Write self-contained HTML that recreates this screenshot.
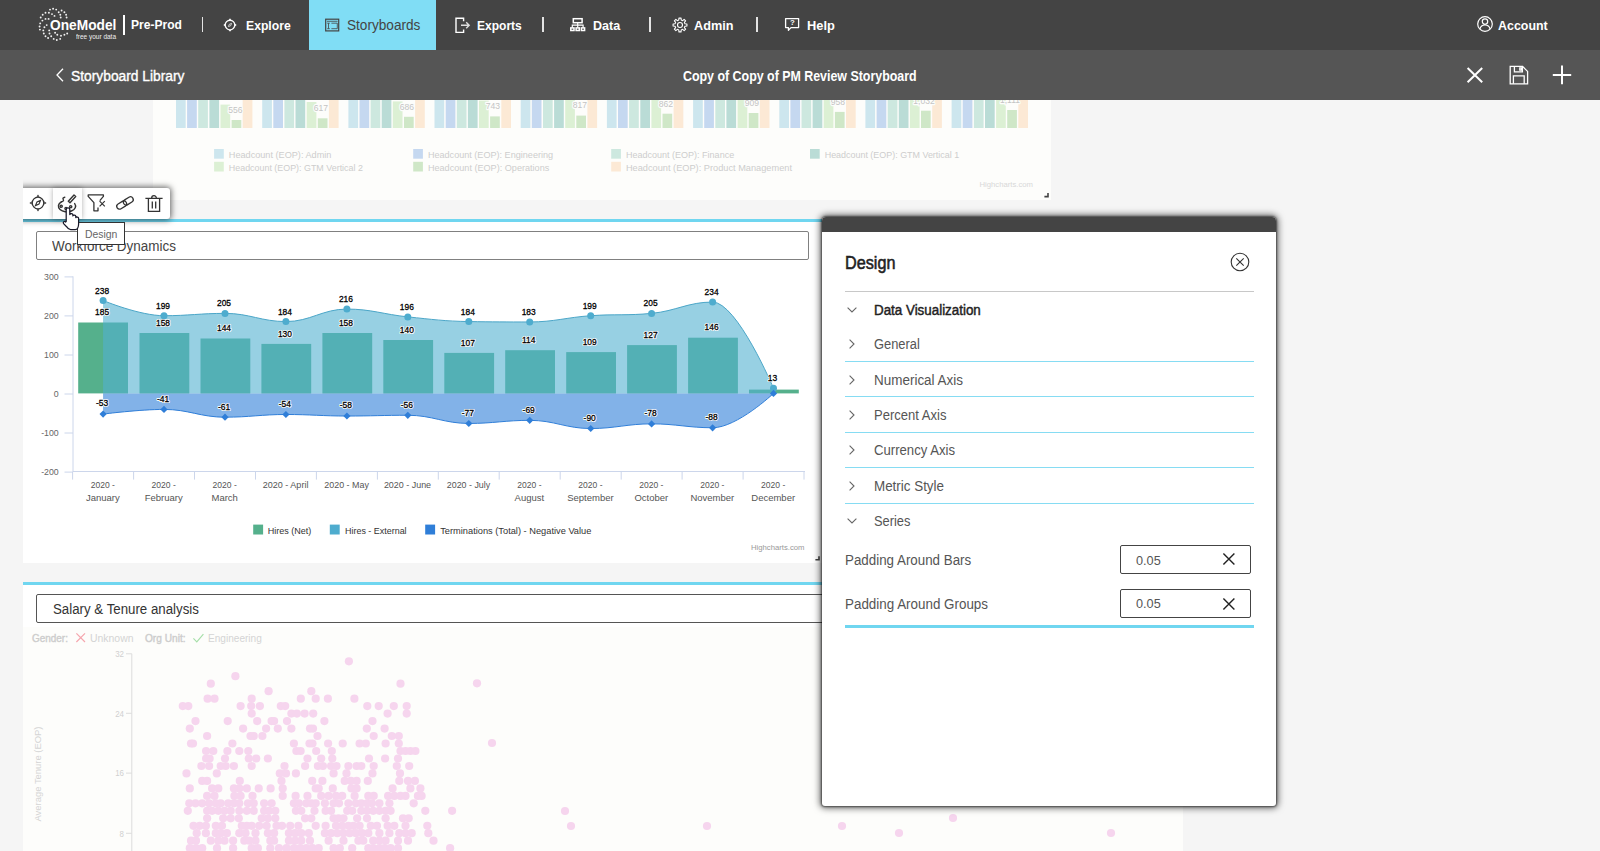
<!DOCTYPE html>
<html><head><meta charset="utf-8"><title>Copy of Copy of PM Review Storyboard</title>
<style>
html,body{margin:0;padding:0}
html{width:1600px;height:851px;overflow:hidden}
body{width:1600px;height:851px;overflow:hidden;position:relative;background:#f5f5f5;font-family:"Liberation Sans",sans-serif;}
.t{position:absolute;white-space:nowrap;transform-origin:0 50%;display:block}
.abs{position:absolute}
svg{position:absolute;overflow:visible}
svg text{font-family:"Liberation Sans",sans-serif}
#nav{position:absolute;left:0;top:0;width:1600px;height:50px;background:#444}
#sub{position:absolute;left:0;top:50px;width:1600px;height:50px;background:#555}
.sep{position:absolute;top:17px;height:14.5px;width:1.5px;background:#e4e4e4}
.card{position:absolute;background:#fff}
.inp{position:absolute;box-sizing:border-box;border:1px solid #808080;border-radius:2px;background:#fff}
.bl{position:absolute;height:1px;background:#86dcf3;left:844.5px;width:409.5px}
</style></head>
<body>
<div id="nav">
<svg width="130" height="50" style="left:0;top:0" fill="#fff" fill-opacity="0.93"><circle cx="53.1" cy="8.8" r="0.95"/><circle cx="50.0" cy="9.6" r="0.95"/><circle cx="56.2" cy="9.6" r="0.95"/><circle cx="61.6" cy="10.5" r="0.95"/><circle cx="58.7" cy="12.2" r="0.95"/><circle cx="64.4" cy="12.2" r="0.95"/><circle cx="45.5" cy="12.7" r="0.95"/><circle cx="48.9" cy="12.7" r="0.95"/><circle cx="52.0" cy="14.1" r="0.95"/><circle cx="42.7" cy="14.7" r="0.95"/><circle cx="60.3" cy="14.7" r="0.95"/><circle cx="66.1" cy="14.7" r="0.95"/><circle cx="54.5" cy="15.9" r="0.95"/><circle cx="40.7" cy="17.5" r="0.95"/><circle cx="60.7" cy="17.5" r="0.95"/><circle cx="66.6" cy="17.5" r="0.95"/><circle cx="45.5" cy="18.9" r="0.95"/><circle cx="48.6" cy="18.9" r="0.95"/><circle cx="42.4" cy="20.6" r="0.95"/><circle cx="40.2" cy="23.4" r="0.95"/><circle cx="46.7" cy="25.1" r="0.95"/><circle cx="39.6" cy="26.5" r="0.95"/><circle cx="44.4" cy="27.3" r="0.95"/><circle cx="39.9" cy="29.6" r="0.95"/><circle cx="43.3" cy="30.4" r="0.95"/><circle cx="49.2" cy="30.4" r="0.95"/><circle cx="55.1" cy="32.7" r="0.95"/><circle cx="43.8" cy="33.5" r="0.95"/><circle cx="49.5" cy="33.5" r="0.95"/><circle cx="67.2" cy="33.5" r="0.95"/><circle cx="57.3" cy="34.7" r="0.95"/><circle cx="64.4" cy="34.7" r="0.95"/><circle cx="61.0" cy="35.8" r="0.95"/><circle cx="45.5" cy="36.3" r="0.95"/><circle cx="51.2" cy="36.3" r="0.95"/><circle cx="48.1" cy="38.0" r="0.95"/><circle cx="53.7" cy="38.9" r="0.95"/><circle cx="60.2" cy="38.9" r="0.95"/><circle cx="56.8" cy="40.0" r="0.95"/></svg>
<span class="t" style="left:49.7px;top:16.1px;font-size:15px;line-height:18px;font-weight:bold;color:#fff;transform:scaleX(0.9159);">OneModel</span>
<span class="t" style="left:76.0px;top:32.2px;font-size:8px;line-height:10px;font-weight:normal;color:#f0f0f0;transform:scaleX(0.8104);">free your data</span>
<div class="abs" style="left:122.6px;top:15px;width:2px;height:20px;background:#fff"></div>
<span class="t" style="left:131.0px;top:17.5px;font-size:12.5px;line-height:15px;font-weight:bold;color:#fff;transform:scaleX(0.9661);">Pre-Prod</span>
<div class="sep" style="left:201.6px"></div>
<div class="sep" style="left:542.0px"></div>
<div class="sep" style="left:649.0px"></div>
<div class="sep" style="left:756.2px"></div>
<svg width="16" height="16" style="left:222.4px;top:16.5px" fill="none" stroke="#fff" stroke-width="1.35">
<circle cx="8" cy="8" r="4.800"/><path d="M8 1.300l1.200 1.800h-2.400zM8 14.700l1.200-1.800h-2.400zM1.300 8l1.800-1.200v2.400zM14.700 8l-1.800-1.200v2.400z" fill="#fff" stroke="none"/>
<path d="M9.600 6.400L8.700 8.700 6.400 9.600 7.300 7.300z" stroke-width="0.900" stroke="#ddd"/></svg>
<span class="t" style="left:245.6px;top:17.6px;font-size:13.5px;line-height:16px;font-weight:bold;color:#fff;transform:scaleX(0.9027);">Explore</span>
<div class="abs" style="left:309px;top:0;width:127.4px;height:50px;background:#80ddf5"></div>
<svg width="16" height="14" style="left:324px;top:17.9px" fill="none" stroke="#444" stroke-width="1.2">
<rect x="1.700" y="1.200" width="13" height="11.700"/><path d="M3 3.300h10.600M3.200 5.200h2.600M3.200 10.700h2.600M4.500 5.200v5.500M7.400 5.200h5.900v5.500H7.400" stroke-width="0.8"/></svg>
<span class="t" style="left:346.9px;top:16.8px;font-size:14px;line-height:17px;font-weight:normal;color:#444;transform:scaleX(0.9725);">Storyboards</span>
<svg width="18" height="18" style="left:453.5px;top:15.5px" fill="none" stroke="#fff" stroke-width="1.4">
<path d="M9.6 5.2V2.2H2v14.2h7.6v-3"/><path d="M7 9.200h8M12.200 6.200l3 3-3 3" stroke="#ddd" stroke-width="1.400"/></svg>
<span class="t" style="left:477.2px;top:17.6px;font-size:13.5px;line-height:16px;font-weight:bold;color:#fff;transform:scaleX(0.8914);">Exports</span>
<svg width="18" height="16" style="left:568.5px;top:16.5px" fill="none" stroke="#fff" stroke-width="1.5">
<rect x="4.300" y="1.700" width="8.800" height="4"/><path d="M8.700 5.700v2.500M3.300 10.800V8.200h10.800v2.600M8.700 8.200v2.600" stroke-width="1.200"/>
<rect x="1.800" y="10.900" width="3.200" height="2.600"/><rect x="7.100" y="10.900" width="3.200" height="2.600"/><rect x="12.400" y="10.900" width="3.200" height="2.600"/></svg>
<span class="t" style="left:592.8px;top:17.6px;font-size:13.5px;line-height:16px;font-weight:bold;color:#fff;transform:scaleX(0.9296);">Data</span>
<svg width="16" height="16" style="left:671.7px;top:16.6px" fill="none" stroke="#fff" stroke-width="1.1" stroke-linejoin="round">
<path d="M6.79 3.05 L6.95 1.08 L9.05 1.08 L9.21 3.05 L10.65 3.64 L12.15 2.37 L13.63 3.85 L12.36 5.35 L12.95 6.79 L14.92 6.95 L14.92 9.05 L12.95 9.21 L12.36 10.65 L13.63 12.15 L12.15 13.63 L10.65 12.36 L9.21 12.95 L9.05 14.92 L6.95 14.92 L6.79 12.95 L5.35 12.36 L3.85 13.63 L2.37 12.15 L3.64 10.65 L3.05 9.21 L1.08 9.05 L1.08 6.95 L3.05 6.79 L3.64 5.35 L2.37 3.85 L3.85 2.37 L5.35 3.64 Z"/><circle cx="8" cy="8" r="2.5"/></svg>
<span class="t" style="left:693.6px;top:17.6px;font-size:13.5px;line-height:16px;font-weight:bold;color:#fff;transform:scaleX(0.9382);">Admin</span>
<svg width="16" height="15" style="left:784px;top:17px" fill="none" stroke="#fff" stroke-width="1.3">
<path d="M1.6 1.6h13v9H7l-2.6 2.6V10.6H1.6z" stroke-linejoin="round"/></svg>
<span class="t" style="left:789.6px;top:18.4px;font-size:8px;line-height:10px;font-weight:bold;color:#fff;transform:scaleX(0.9823);">?</span>
<span class="t" style="left:807.2px;top:17.6px;font-size:13.5px;line-height:16px;font-weight:bold;color:#fff;transform:scaleX(0.9503);">Help</span>
<svg width="18" height="18" style="left:1475.7px;top:15.4px" fill="none" stroke="#fff" stroke-width="1.2">
<circle cx="9" cy="9" r="7.3"/><circle cx="9" cy="6.6" r="2.7"/><path d="M3.9 14c.6-2.6 2.6-4 5.1-4s4.5 1.4 5.1 4"/></svg>
<span class="t" style="left:1498.4px;top:17.6px;font-size:13.5px;line-height:16px;font-weight:bold;color:#fff;transform:scaleX(0.9204);">Account</span>
</div>
<div id="sub"></div>
<svg width="10" height="16" style="left:55px;top:67.4px" fill="none" stroke="#fff" stroke-width="1.3"><path d="M8 1.8L2 8l6 6.2"/></svg>
<span class="t" style="left:71.3px;top:67.7px;font-size:14px;line-height:17px;font-weight:normal;color:#fff;transform:scaleX(0.9856);-webkit-text-stroke:0.35px #fff;">Storyboard Library</span>
<span class="t" style="left:682.7px;top:66.8px;font-size:15px;line-height:18px;font-weight:bold;color:#fff;transform:scaleX(0.8269);">Copy of Copy of PM Review Storyboard</span>
<svg width="20" height="20" style="left:1465px;top:65.4px" fill="none" stroke="#fff" stroke-width="2"><path d="M2.6 3l14.6 14.2M17.2 3L2.6 17.2"/></svg>
<svg width="22" height="22" style="left:1507.5px;top:64.4px" fill="none" stroke="#fff" stroke-width="1.3">
<path d="M2.2 2.4h12.4l5 5v12.4H2.2z"/><path d="M6.4 2.4v5.4h8V2.4M11.8 3.8h1.6v2.4h-1.6zM5.4 19.8v-8h10.8v8"/></svg>
<svg width="22" height="22" style="left:1551px;top:64.4px" fill="none" stroke="#fff" stroke-width="2"><path d="M11 1.6v18.6M1.8 11h18.4"/></svg>
<div class="card" style="left:153px;top:100px;width:898px;height:100px;background:#fdfdfb"></div>
<svg width="1600" height="110" style="left:0;top:100px;overflow:hidden" viewBox="0 100 1600 110"><rect x="176.0" y="100.0" width="9.7" height="28.0" fill="#cde6ee"/><rect x="187.1" y="100.0" width="9.7" height="28.0" fill="#c5d8f0"/><rect x="198.2" y="100.0" width="9.7" height="28.0" fill="#cde8df"/><rect x="209.4" y="100.0" width="9.7" height="28.0" fill="#badcd6"/><rect x="220.5" y="104.6" width="9.7" height="23.4" fill="#dcf0d4"/><rect x="231.6" y="120.0" width="9.7" height="8.0" fill="#cfe7c7"/><rect x="242.7" y="100.0" width="9.7" height="28.0" fill="#fce9d5"/><rect x="262.2" y="100.0" width="9.7" height="28.0" fill="#cde6ee"/><rect x="273.3" y="100.0" width="9.7" height="28.0" fill="#c5d8f0"/><rect x="284.4" y="100.0" width="9.7" height="28.0" fill="#cde8df"/><rect x="295.5" y="100.0" width="9.7" height="28.0" fill="#badcd6"/><rect x="306.7" y="102.0" width="9.7" height="26.0" fill="#dcf0d4"/><rect x="317.8" y="118.3" width="9.7" height="9.7" fill="#cfe7c7"/><rect x="328.9" y="100.0" width="9.7" height="28.0" fill="#fce9d5"/><rect x="348.4" y="100.0" width="9.7" height="28.0" fill="#cde6ee"/><rect x="359.5" y="100.0" width="9.7" height="28.0" fill="#c5d8f0"/><rect x="370.6" y="100.0" width="9.7" height="28.0" fill="#cde8df"/><rect x="381.7" y="100.0" width="9.7" height="28.0" fill="#badcd6"/><rect x="392.8" y="101.4" width="9.7" height="26.6" fill="#dcf0d4"/><rect x="404.0" y="116.8" width="9.7" height="11.2" fill="#cfe7c7"/><rect x="415.1" y="100.0" width="9.7" height="28.0" fill="#fce9d5"/><rect x="434.5" y="100.0" width="9.7" height="28.0" fill="#cde6ee"/><rect x="445.7" y="100.0" width="9.7" height="28.0" fill="#c5d8f0"/><rect x="456.8" y="100.0" width="9.7" height="28.0" fill="#cde8df"/><rect x="467.9" y="100.0" width="9.7" height="28.0" fill="#badcd6"/><rect x="479.0" y="100.6" width="9.7" height="27.4" fill="#dcf0d4"/><rect x="490.1" y="116.4" width="9.7" height="11.6" fill="#cfe7c7"/><rect x="501.3" y="100.0" width="9.7" height="28.0" fill="#fce9d5"/><rect x="520.7" y="100.0" width="9.7" height="28.0" fill="#cde6ee"/><rect x="531.8" y="100.0" width="9.7" height="28.0" fill="#c5d8f0"/><rect x="543.0" y="100.0" width="9.7" height="28.0" fill="#cde8df"/><rect x="554.1" y="100.0" width="9.7" height="28.0" fill="#badcd6"/><rect x="565.2" y="100.0" width="9.7" height="28.0" fill="#dcf0d4"/><rect x="576.3" y="115.6" width="9.7" height="12.4" fill="#cfe7c7"/><rect x="587.4" y="100.0" width="9.7" height="28.0" fill="#fce9d5"/><rect x="606.9" y="100.0" width="9.7" height="28.0" fill="#cde6ee"/><rect x="618.0" y="100.0" width="9.7" height="28.0" fill="#c5d8f0"/><rect x="629.1" y="100.0" width="9.7" height="28.0" fill="#cde8df"/><rect x="640.3" y="100.0" width="9.7" height="28.0" fill="#badcd6"/><rect x="651.4" y="100.0" width="9.7" height="28.0" fill="#dcf0d4"/><rect x="662.5" y="113.7" width="9.7" height="14.3" fill="#cfe7c7"/><rect x="673.6" y="100.0" width="9.7" height="28.0" fill="#fce9d5"/><rect x="693.1" y="100.0" width="9.7" height="28.0" fill="#cde6ee"/><rect x="704.2" y="100.0" width="9.7" height="28.0" fill="#c5d8f0"/><rect x="715.3" y="100.0" width="9.7" height="28.0" fill="#cde8df"/><rect x="726.4" y="100.0" width="9.7" height="28.0" fill="#badcd6"/><rect x="737.6" y="100.0" width="9.7" height="28.0" fill="#dcf0d4"/><rect x="748.7" y="113.0" width="9.7" height="15.0" fill="#cfe7c7"/><rect x="759.8" y="100.0" width="9.7" height="28.0" fill="#fce9d5"/><rect x="779.3" y="100.0" width="9.7" height="28.0" fill="#cde6ee"/><rect x="790.4" y="100.0" width="9.7" height="28.0" fill="#c5d8f0"/><rect x="801.5" y="100.0" width="9.7" height="28.0" fill="#cde8df"/><rect x="812.6" y="100.0" width="9.7" height="28.0" fill="#badcd6"/><rect x="823.7" y="100.0" width="9.7" height="28.0" fill="#dcf0d4"/><rect x="834.9" y="111.9" width="9.7" height="16.1" fill="#cfe7c7"/><rect x="846.0" y="100.0" width="9.7" height="28.0" fill="#fce9d5"/><rect x="865.4" y="100.0" width="9.7" height="28.0" fill="#cde6ee"/><rect x="876.6" y="100.0" width="9.7" height="28.0" fill="#c5d8f0"/><rect x="887.7" y="100.0" width="9.7" height="28.0" fill="#cde8df"/><rect x="898.8" y="100.0" width="9.7" height="28.0" fill="#badcd6"/><rect x="909.9" y="100.0" width="9.7" height="28.0" fill="#dcf0d4"/><rect x="921.0" y="110.7" width="9.7" height="17.3" fill="#cfe7c7"/><rect x="932.2" y="100.0" width="9.7" height="28.0" fill="#fce9d5"/><rect x="951.6" y="100.0" width="9.7" height="28.0" fill="#cde6ee"/><rect x="962.7" y="100.0" width="9.7" height="28.0" fill="#c5d8f0"/><rect x="973.9" y="100.0" width="9.7" height="28.0" fill="#cde8df"/><rect x="985.0" y="100.0" width="9.7" height="28.0" fill="#badcd6"/><rect x="996.1" y="100.0" width="9.7" height="28.0" fill="#dcf0d4"/><rect x="1007.2" y="110.0" width="9.7" height="18.0" fill="#cfe7c7"/><rect x="1018.3" y="100.0" width="9.7" height="28.0" fill="#fce9d5"/><text x="235.3" y="112.9" font-size="9.5" text-anchor="middle" textLength="14.3" lengthAdjust="spacingAndGlyphs" fill="#fdfdfb" stroke="#fdfdfb" stroke-width="2.4" stroke-linejoin="round">556</text><text x="235.3" y="112.9" font-size="9.5" text-anchor="middle" textLength="14.3" lengthAdjust="spacingAndGlyphs" fill="#c4c4c4">556</text><text x="321.0" y="110.7" font-size="9.5" text-anchor="middle" textLength="14.3" lengthAdjust="spacingAndGlyphs" fill="#fdfdfb" stroke="#fdfdfb" stroke-width="2.4" stroke-linejoin="round">617</text><text x="321.0" y="110.7" font-size="9.5" text-anchor="middle" textLength="14.3" lengthAdjust="spacingAndGlyphs" fill="#c4c4c4">617</text><text x="407.0" y="109.9" font-size="9.5" text-anchor="middle" textLength="14.3" lengthAdjust="spacingAndGlyphs" fill="#fdfdfb" stroke="#fdfdfb" stroke-width="2.4" stroke-linejoin="round">686</text><text x="407.0" y="109.9" font-size="9.5" text-anchor="middle" textLength="14.3" lengthAdjust="spacingAndGlyphs" fill="#c4c4c4">686</text><text x="493.0" y="108.5" font-size="9.5" text-anchor="middle" textLength="14.3" lengthAdjust="spacingAndGlyphs" fill="#fdfdfb" stroke="#fdfdfb" stroke-width="2.4" stroke-linejoin="round">743</text><text x="493.0" y="108.5" font-size="9.5" text-anchor="middle" textLength="14.3" lengthAdjust="spacingAndGlyphs" fill="#c4c4c4">743</text><text x="580.0" y="107.5" font-size="9.5" text-anchor="middle" textLength="14.3" lengthAdjust="spacingAndGlyphs" fill="#fdfdfb" stroke="#fdfdfb" stroke-width="2.4" stroke-linejoin="round">817</text><text x="580.0" y="107.5" font-size="9.5" text-anchor="middle" textLength="14.3" lengthAdjust="spacingAndGlyphs" fill="#c4c4c4">817</text><text x="666.0" y="106.5" font-size="9.5" text-anchor="middle" textLength="14.3" lengthAdjust="spacingAndGlyphs" fill="#fdfdfb" stroke="#fdfdfb" stroke-width="2.4" stroke-linejoin="round">862</text><text x="666.0" y="106.5" font-size="9.5" text-anchor="middle" textLength="14.3" lengthAdjust="spacingAndGlyphs" fill="#c4c4c4">862</text><text x="752.0" y="105.5" font-size="9.5" text-anchor="middle" textLength="14.3" lengthAdjust="spacingAndGlyphs" fill="#fdfdfb" stroke="#fdfdfb" stroke-width="2.4" stroke-linejoin="round">909</text><text x="752.0" y="105.5" font-size="9.5" text-anchor="middle" textLength="14.3" lengthAdjust="spacingAndGlyphs" fill="#c4c4c4">909</text><text x="838.0" y="104.5" font-size="9.5" text-anchor="middle" textLength="14.3" lengthAdjust="spacingAndGlyphs" fill="#fdfdfb" stroke="#fdfdfb" stroke-width="2.4" stroke-linejoin="round">958</text><text x="838.0" y="104.5" font-size="9.5" text-anchor="middle" textLength="14.3" lengthAdjust="spacingAndGlyphs" fill="#c4c4c4">958</text><text x="924.0" y="103.6" font-size="9.5" text-anchor="middle" textLength="21.4" lengthAdjust="spacingAndGlyphs" fill="#fdfdfb" stroke="#fdfdfb" stroke-width="2.4" stroke-linejoin="round">1,032</text><text x="924.0" y="103.6" font-size="9.5" text-anchor="middle" textLength="21.4" lengthAdjust="spacingAndGlyphs" fill="#c4c4c4">1,032</text><text x="1010.0" y="103.3" font-size="9.5" text-anchor="middle" textLength="20.1" lengthAdjust="spacingAndGlyphs" fill="#fdfdfb" stroke="#fdfdfb" stroke-width="2.4" stroke-linejoin="round">1,111</text><text x="1010.0" y="103.3" font-size="9.5" text-anchor="middle" textLength="20.1" lengthAdjust="spacingAndGlyphs" fill="#c4c4c4">1,111</text><rect x="214.1" y="149.0" width="9.7" height="9.7" fill="#cde6ee"/><text x="228.8" y="157.8" font-size="9" text-anchor="start" textLength="102.6" lengthAdjust="spacingAndGlyphs" fill="#cdcdcd">Headcount (EOP): Admin</text><rect x="214.1" y="161.8" width="9.7" height="9.7" fill="#dcf0d4"/><text x="228.8" y="170.6" font-size="9" text-anchor="start" textLength="134.1" lengthAdjust="spacingAndGlyphs" fill="#cdcdcd">Headcount (EOP): GTM Vertical 2</text><rect x="413.2" y="149.0" width="9.7" height="9.7" fill="#c5d8f0"/><text x="427.9" y="157.8" font-size="9" text-anchor="start" textLength="125.2" lengthAdjust="spacingAndGlyphs" fill="#cdcdcd">Headcount (EOP): Engineering</text><rect x="413.2" y="161.8" width="9.7" height="9.7" fill="#cfe7c7"/><text x="427.9" y="170.6" font-size="9" text-anchor="start" textLength="121.4" lengthAdjust="spacingAndGlyphs" fill="#cdcdcd">Headcount (EOP): Operations</text><rect x="611.2" y="149.0" width="9.7" height="9.7" fill="#cde8df"/><text x="625.9" y="157.8" font-size="9" text-anchor="start" textLength="108.3" lengthAdjust="spacingAndGlyphs" fill="#cdcdcd">Headcount (EOP): Finance</text><rect x="611.2" y="161.8" width="9.7" height="9.7" fill="#fce9d5"/><text x="625.9" y="170.6" font-size="9" text-anchor="start" textLength="166.1" lengthAdjust="spacingAndGlyphs" fill="#cdcdcd">Headcount (EOP): Product Management</text><rect x="810.0" y="149.0" width="9.7" height="9.7" fill="#badcd6"/><text x="824.7" y="157.8" font-size="9" text-anchor="start" textLength="134.5" lengthAdjust="spacingAndGlyphs" fill="#cdcdcd">Headcount (EOP): GTM Vertical 1</text><text x="979.5" y="187.0" font-size="7.5" text-anchor="start" textLength="53.5" lengthAdjust="spacingAndGlyphs" fill="#d8d8d8">Highcharts.com</text><path d="M1044.4 196.6h3.6v-3.600" fill="none" stroke="#444" stroke-width="1.600"/></svg>
<div class="card" style="left:23px;top:219px;width:799px;height:344.4px;border-top:3px solid #70d6f0;box-sizing:border-box"></div>
<div class="inp" style="left:36.4px;top:231px;width:772.3px;height:29.2px"></div>
<span class="t" style="left:52.2px;top:238.4px;font-size:14px;line-height:17px;font-weight:normal;color:#444;transform:scaleX(0.9622);">Workforce Dynamics</span>
<svg width="830" height="300" style="left:0;top:265px" viewBox="0 265 830 300"><path d="M73 276.3V471.5H805" fill="none" stroke="#ccd6eb" stroke-width="1"/><path d="M64.5 276.9H73" stroke="#ccd6eb" stroke-width="1"/><text x="58.7" y="279.7" font-size="9.7" text-anchor="end" textLength="14.6" lengthAdjust="spacingAndGlyphs" fill="#666">300</text><path d="M64.5 315.9H73" stroke="#ccd6eb" stroke-width="1"/><text x="58.7" y="318.7" font-size="9.7" text-anchor="end" textLength="14.6" lengthAdjust="spacingAndGlyphs" fill="#666">200</text><path d="M64.5 355.0H73" stroke="#ccd6eb" stroke-width="1"/><text x="58.7" y="357.8" font-size="9.7" text-anchor="end" textLength="14.6" lengthAdjust="spacingAndGlyphs" fill="#666">100</text><path d="M64.5 394.0H73" stroke="#ccd6eb" stroke-width="1"/><text x="58.7" y="396.8" font-size="9.7" text-anchor="end" textLength="4.9" lengthAdjust="spacingAndGlyphs" fill="#666">0</text><path d="M64.5 433.0H73" stroke="#ccd6eb" stroke-width="1"/><text x="58.7" y="435.8" font-size="9.7" text-anchor="end" textLength="17.5" lengthAdjust="spacingAndGlyphs" fill="#666">-100</text><path d="M64.5 472.1H73" stroke="#ccd6eb" stroke-width="1"/><text x="58.7" y="474.9" font-size="9.7" text-anchor="end" textLength="17.5" lengthAdjust="spacingAndGlyphs" fill="#666">-200</text><path d="M72.6 471.5V479.6" stroke="#ccd6eb" stroke-width="1"/><path d="M133.6 471.5V479.6" stroke="#ccd6eb" stroke-width="1"/><path d="M194.5 471.5V479.6" stroke="#ccd6eb" stroke-width="1"/><path d="M255.5 471.5V479.6" stroke="#ccd6eb" stroke-width="1"/><path d="M316.4 471.5V479.6" stroke="#ccd6eb" stroke-width="1"/><path d="M377.4 471.5V479.6" stroke="#ccd6eb" stroke-width="1"/><path d="M438.3 471.5V479.6" stroke="#ccd6eb" stroke-width="1"/><path d="M499.2 471.5V479.6" stroke="#ccd6eb" stroke-width="1"/><path d="M560.2 471.5V479.6" stroke="#ccd6eb" stroke-width="1"/><path d="M621.2 471.5V479.6" stroke="#ccd6eb" stroke-width="1"/><path d="M682.1 471.5V479.6" stroke="#ccd6eb" stroke-width="1"/><path d="M743.1 471.5V479.6" stroke="#ccd6eb" stroke-width="1"/><path d="M804.0 471.5V479.6" stroke="#ccd6eb" stroke-width="1"/><rect x="78.2" y="322.5" width="49.8" height="70.9" fill="#55b08c"/><rect x="139.5" y="333.0" width="49.8" height="60.4" fill="#55b08c"/><rect x="200.5" y="338.5" width="49.8" height="54.9" fill="#55b08c"/><rect x="261.4" y="343.9" width="49.8" height="49.5" fill="#55b08c"/><rect x="322.4" y="333.0" width="49.8" height="60.4" fill="#55b08c"/><rect x="383.3" y="340.0" width="49.8" height="53.4" fill="#55b08c"/><rect x="444.3" y="352.9" width="49.8" height="40.5" fill="#55b08c"/><rect x="505.2" y="350.2" width="49.8" height="43.2" fill="#55b08c"/><rect x="566.2" y="352.1" width="49.8" height="41.3" fill="#55b08c"/><rect x="627.1" y="345.1" width="49.8" height="48.3" fill="#55b08c"/><rect x="688.1" y="337.7" width="49.8" height="55.7" fill="#55b08c"/><rect x="749.0" y="389.6" width="49.8" height="3.8" fill="#55b08c"/><path d="M103.07 300.48 C103.07 300.48 139.65 315.71 164.03 315.71 C188.41 315.71 200.59 313.37 224.97 313.37 C249.36 313.37 261.55 321.57 285.93 321.57 C310.31 321.57 322.50 309.07 346.88 309.07 C371.25 309.07 383.45 314.38 407.83 316.88 C432.21 319.38 444.39 321.18 468.77 321.57 C493.15 321.96 505.35 321.96 529.73 321.96 C554.11 321.96 566.30 317.43 590.68 315.71 C615.06 313.99 627.25 315.71 651.62 313.37 C676.00 311.03 688.20 302.05 712.58 302.05 C736.96 302.05 773.53 388.32 773.53 388.32 L773.53 393.40 L103.07 393.40 Z" fill="#52b0d0" fill-opacity="0.6"/><path d="M103.07 300.48 C103.07 300.48 139.65 315.71 164.03 315.71 C188.41 315.71 200.59 313.37 224.97 313.37 C249.36 313.37 261.55 321.57 285.93 321.57 C310.31 321.57 322.50 309.07 346.88 309.07 C371.25 309.07 383.45 314.38 407.83 316.88 C432.21 319.38 444.39 321.18 468.77 321.57 C493.15 321.96 505.35 321.96 529.73 321.96 C554.11 321.96 566.30 317.43 590.68 315.71 C615.06 313.99 627.25 315.71 651.62 313.37 C676.00 311.03 688.20 302.05 712.58 302.05 C736.96 302.05 773.53 388.32 773.53 388.32" fill="none" stroke="#4ba6c8" stroke-width="1"/><path d="M103.07 414.09 C103.07 414.09 139.65 409.41 164.03 409.41 C188.41 409.41 200.59 417.21 224.97 417.21 C249.36 417.21 261.55 414.48 285.93 414.48 C310.31 414.48 322.50 416.04 346.88 416.04 C371.25 416.04 383.45 415.26 407.83 415.26 C432.21 415.26 444.39 423.46 468.77 423.46 C493.15 423.46 505.35 420.34 529.73 420.34 C554.11 420.34 566.30 428.54 590.68 428.54 C615.06 428.54 627.25 423.85 651.62 423.85 C676.00 423.85 688.20 427.76 712.58 427.76 C736.96 427.76 773.53 393.40 773.53 393.40 L773.53 393.40 L103.07 393.40 Z" fill="#2f7ed8" fill-opacity="0.6"/><path d="M103.07 414.09 C103.07 414.09 139.65 409.41 164.03 409.41 C188.41 409.41 200.59 417.21 224.97 417.21 C249.36 417.21 261.55 414.48 285.93 414.48 C310.31 414.48 322.50 416.04 346.88 416.04 C371.25 416.04 383.45 415.26 407.83 415.26 C432.21 415.26 444.39 423.46 468.77 423.46 C493.15 423.46 505.35 420.34 529.73 420.34 C554.11 420.34 566.30 428.54 590.68 428.54 C615.06 428.54 627.25 423.85 651.62 423.85 C676.00 423.85 688.20 427.76 712.58 427.76 C736.96 427.76 773.53 393.40 773.53 393.40" fill="none" stroke="#2f7ed8" stroke-width="1"/><circle cx="103.1" cy="300.5" r="3.5" fill="#4eacce"/><circle cx="164.0" cy="315.7" r="3.5" fill="#4eacce"/><circle cx="225.0" cy="313.4" r="3.5" fill="#4eacce"/><circle cx="285.9" cy="321.6" r="3.5" fill="#4eacce"/><circle cx="346.9" cy="309.1" r="3.5" fill="#4eacce"/><circle cx="407.8" cy="316.9" r="3.5" fill="#4eacce"/><circle cx="468.8" cy="321.6" r="3.5" fill="#4eacce"/><circle cx="529.7" cy="322.0" r="3.5" fill="#4eacce"/><circle cx="590.7" cy="315.7" r="3.5" fill="#4eacce"/><circle cx="651.6" cy="313.4" r="3.5" fill="#4eacce"/><circle cx="712.6" cy="302.0" r="3.5" fill="#4eacce"/><circle cx="773.5" cy="388.3" r="3.5" fill="#4eacce"/><path d="M103.1 410.5l3.6 3.6-3.6 3.6-3.6-3.6z" fill="#2f7ed8"/><path d="M164.0 405.8l3.6 3.6-3.6 3.6-3.6-3.6z" fill="#2f7ed8"/><path d="M225.0 413.6l3.6 3.6-3.6 3.6-3.6-3.6z" fill="#2f7ed8"/><path d="M285.9 410.9l3.6 3.6-3.6 3.6-3.6-3.6z" fill="#2f7ed8"/><path d="M346.9 412.4l3.6 3.6-3.6 3.6-3.6-3.6z" fill="#2f7ed8"/><path d="M407.8 411.7l3.6 3.6-3.6 3.6-3.6-3.6z" fill="#2f7ed8"/><path d="M468.8 419.9l3.6 3.6-3.6 3.6-3.6-3.6z" fill="#2f7ed8"/><path d="M529.7 416.7l3.6 3.6-3.6 3.6-3.6-3.6z" fill="#2f7ed8"/><path d="M590.7 424.9l3.6 3.6-3.6 3.6-3.6-3.6z" fill="#2f7ed8"/><path d="M651.6 420.3l3.6 3.6-3.6 3.6-3.6-3.6z" fill="#2f7ed8"/><path d="M712.6 424.2l3.6 3.6-3.6 3.6-3.6-3.6z" fill="#2f7ed8"/><path d="M773.5 389.8l3.6 3.6-3.6 3.6-3.6-3.6z" fill="#2f7ed8"/><text x="102.1" y="293.5" font-size="9.5" text-anchor="middle" textLength="14.0" lengthAdjust="spacingAndGlyphs" fill="#fff" stroke="#fff" stroke-width="2.2" stroke-linejoin="round" stroke-opacity="0.95">238</text><text x="102.1" y="293.5" font-size="9.5" text-anchor="middle" textLength="14.0" lengthAdjust="spacingAndGlyphs" fill="#000" stroke="#000" stroke-width="0.3">238</text><text x="102.1" y="315.1" font-size="9.5" text-anchor="middle" textLength="14.0" lengthAdjust="spacingAndGlyphs" fill="#fff" stroke="#fff" stroke-width="2.2" stroke-linejoin="round" stroke-opacity="0.95">185</text><text x="102.1" y="315.1" font-size="9.5" text-anchor="middle" textLength="14.0" lengthAdjust="spacingAndGlyphs" fill="#000" stroke="#000" stroke-width="0.3">185</text><text x="102.1" y="406.4" font-size="9.5" text-anchor="middle" textLength="12.2" lengthAdjust="spacingAndGlyphs" fill="#fff" stroke="#fff" stroke-width="2.2" stroke-linejoin="round" stroke-opacity="0.95">-53</text><text x="102.1" y="406.4" font-size="9.5" text-anchor="middle" textLength="12.2" lengthAdjust="spacingAndGlyphs" fill="#000" stroke="#000" stroke-width="0.3">-53</text><text x="163.0" y="308.7" font-size="9.5" text-anchor="middle" textLength="14.0" lengthAdjust="spacingAndGlyphs" fill="#fff" stroke="#fff" stroke-width="2.2" stroke-linejoin="round" stroke-opacity="0.95">199</text><text x="163.0" y="308.7" font-size="9.5" text-anchor="middle" textLength="14.0" lengthAdjust="spacingAndGlyphs" fill="#000" stroke="#000" stroke-width="0.3">199</text><text x="163.0" y="325.6" font-size="9.5" text-anchor="middle" textLength="14.0" lengthAdjust="spacingAndGlyphs" fill="#fff" stroke="#fff" stroke-width="2.2" stroke-linejoin="round" stroke-opacity="0.95">158</text><text x="163.0" y="325.6" font-size="9.5" text-anchor="middle" textLength="14.0" lengthAdjust="spacingAndGlyphs" fill="#000" stroke="#000" stroke-width="0.3">158</text><text x="163.0" y="401.7" font-size="9.5" text-anchor="middle" textLength="12.2" lengthAdjust="spacingAndGlyphs" fill="#fff" stroke="#fff" stroke-width="2.2" stroke-linejoin="round" stroke-opacity="0.95">-41</text><text x="163.0" y="401.7" font-size="9.5" text-anchor="middle" textLength="12.2" lengthAdjust="spacingAndGlyphs" fill="#000" stroke="#000" stroke-width="0.3">-41</text><text x="224.0" y="306.4" font-size="9.5" text-anchor="middle" textLength="14.0" lengthAdjust="spacingAndGlyphs" fill="#fff" stroke="#fff" stroke-width="2.2" stroke-linejoin="round" stroke-opacity="0.95">205</text><text x="224.0" y="306.4" font-size="9.5" text-anchor="middle" textLength="14.0" lengthAdjust="spacingAndGlyphs" fill="#000" stroke="#000" stroke-width="0.3">205</text><text x="224.0" y="331.1" font-size="9.5" text-anchor="middle" textLength="14.0" lengthAdjust="spacingAndGlyphs" fill="#fff" stroke="#fff" stroke-width="2.2" stroke-linejoin="round" stroke-opacity="0.95">144</text><text x="224.0" y="331.1" font-size="9.5" text-anchor="middle" textLength="14.0" lengthAdjust="spacingAndGlyphs" fill="#000" stroke="#000" stroke-width="0.3">144</text><text x="224.0" y="409.5" font-size="9.5" text-anchor="middle" textLength="12.2" lengthAdjust="spacingAndGlyphs" fill="#fff" stroke="#fff" stroke-width="2.2" stroke-linejoin="round" stroke-opacity="0.95">-61</text><text x="224.0" y="409.5" font-size="9.5" text-anchor="middle" textLength="12.2" lengthAdjust="spacingAndGlyphs" fill="#000" stroke="#000" stroke-width="0.3">-61</text><text x="284.9" y="314.6" font-size="9.5" text-anchor="middle" textLength="14.0" lengthAdjust="spacingAndGlyphs" fill="#fff" stroke="#fff" stroke-width="2.2" stroke-linejoin="round" stroke-opacity="0.95">184</text><text x="284.9" y="314.6" font-size="9.5" text-anchor="middle" textLength="14.0" lengthAdjust="spacingAndGlyphs" fill="#000" stroke="#000" stroke-width="0.3">184</text><text x="284.9" y="336.5" font-size="9.5" text-anchor="middle" textLength="14.0" lengthAdjust="spacingAndGlyphs" fill="#fff" stroke="#fff" stroke-width="2.2" stroke-linejoin="round" stroke-opacity="0.95">130</text><text x="284.9" y="336.5" font-size="9.5" text-anchor="middle" textLength="14.0" lengthAdjust="spacingAndGlyphs" fill="#000" stroke="#000" stroke-width="0.3">130</text><text x="284.9" y="406.8" font-size="9.5" text-anchor="middle" textLength="12.2" lengthAdjust="spacingAndGlyphs" fill="#fff" stroke="#fff" stroke-width="2.2" stroke-linejoin="round" stroke-opacity="0.95">-54</text><text x="284.9" y="406.8" font-size="9.5" text-anchor="middle" textLength="12.2" lengthAdjust="spacingAndGlyphs" fill="#000" stroke="#000" stroke-width="0.3">-54</text><text x="345.9" y="302.1" font-size="9.5" text-anchor="middle" textLength="14.0" lengthAdjust="spacingAndGlyphs" fill="#fff" stroke="#fff" stroke-width="2.2" stroke-linejoin="round" stroke-opacity="0.95">216</text><text x="345.9" y="302.1" font-size="9.5" text-anchor="middle" textLength="14.0" lengthAdjust="spacingAndGlyphs" fill="#000" stroke="#000" stroke-width="0.3">216</text><text x="345.9" y="325.6" font-size="9.5" text-anchor="middle" textLength="14.0" lengthAdjust="spacingAndGlyphs" fill="#fff" stroke="#fff" stroke-width="2.2" stroke-linejoin="round" stroke-opacity="0.95">158</text><text x="345.9" y="325.6" font-size="9.5" text-anchor="middle" textLength="14.0" lengthAdjust="spacingAndGlyphs" fill="#000" stroke="#000" stroke-width="0.3">158</text><text x="345.9" y="408.3" font-size="9.5" text-anchor="middle" textLength="12.2" lengthAdjust="spacingAndGlyphs" fill="#fff" stroke="#fff" stroke-width="2.2" stroke-linejoin="round" stroke-opacity="0.95">-58</text><text x="345.9" y="408.3" font-size="9.5" text-anchor="middle" textLength="12.2" lengthAdjust="spacingAndGlyphs" fill="#000" stroke="#000" stroke-width="0.3">-58</text><text x="406.8" y="309.9" font-size="9.5" text-anchor="middle" textLength="14.0" lengthAdjust="spacingAndGlyphs" fill="#fff" stroke="#fff" stroke-width="2.2" stroke-linejoin="round" stroke-opacity="0.95">196</text><text x="406.8" y="309.9" font-size="9.5" text-anchor="middle" textLength="14.0" lengthAdjust="spacingAndGlyphs" fill="#000" stroke="#000" stroke-width="0.3">196</text><text x="406.8" y="332.6" font-size="9.5" text-anchor="middle" textLength="14.0" lengthAdjust="spacingAndGlyphs" fill="#fff" stroke="#fff" stroke-width="2.2" stroke-linejoin="round" stroke-opacity="0.95">140</text><text x="406.8" y="332.6" font-size="9.5" text-anchor="middle" textLength="14.0" lengthAdjust="spacingAndGlyphs" fill="#000" stroke="#000" stroke-width="0.3">140</text><text x="406.8" y="407.6" font-size="9.5" text-anchor="middle" textLength="12.2" lengthAdjust="spacingAndGlyphs" fill="#fff" stroke="#fff" stroke-width="2.2" stroke-linejoin="round" stroke-opacity="0.95">-56</text><text x="406.8" y="407.6" font-size="9.5" text-anchor="middle" textLength="12.2" lengthAdjust="spacingAndGlyphs" fill="#000" stroke="#000" stroke-width="0.3">-56</text><text x="467.8" y="314.6" font-size="9.5" text-anchor="middle" textLength="14.0" lengthAdjust="spacingAndGlyphs" fill="#fff" stroke="#fff" stroke-width="2.2" stroke-linejoin="round" stroke-opacity="0.95">184</text><text x="467.8" y="314.6" font-size="9.5" text-anchor="middle" textLength="14.0" lengthAdjust="spacingAndGlyphs" fill="#000" stroke="#000" stroke-width="0.3">184</text><text x="467.8" y="345.5" font-size="9.5" text-anchor="middle" textLength="14.0" lengthAdjust="spacingAndGlyphs" fill="#fff" stroke="#fff" stroke-width="2.2" stroke-linejoin="round" stroke-opacity="0.95">107</text><text x="467.8" y="345.5" font-size="9.5" text-anchor="middle" textLength="14.0" lengthAdjust="spacingAndGlyphs" fill="#000" stroke="#000" stroke-width="0.3">107</text><text x="467.8" y="415.8" font-size="9.5" text-anchor="middle" textLength="12.2" lengthAdjust="spacingAndGlyphs" fill="#fff" stroke="#fff" stroke-width="2.2" stroke-linejoin="round" stroke-opacity="0.95">-77</text><text x="467.8" y="415.8" font-size="9.5" text-anchor="middle" textLength="12.2" lengthAdjust="spacingAndGlyphs" fill="#000" stroke="#000" stroke-width="0.3">-77</text><text x="528.7" y="315.0" font-size="9.5" text-anchor="middle" textLength="14.0" lengthAdjust="spacingAndGlyphs" fill="#fff" stroke="#fff" stroke-width="2.2" stroke-linejoin="round" stroke-opacity="0.95">183</text><text x="528.7" y="315.0" font-size="9.5" text-anchor="middle" textLength="14.0" lengthAdjust="spacingAndGlyphs" fill="#000" stroke="#000" stroke-width="0.3">183</text><text x="528.7" y="342.8" font-size="9.5" text-anchor="middle" textLength="13.4" lengthAdjust="spacingAndGlyphs" fill="#fff" stroke="#fff" stroke-width="2.2" stroke-linejoin="round" stroke-opacity="0.95">114</text><text x="528.7" y="342.8" font-size="9.5" text-anchor="middle" textLength="13.4" lengthAdjust="spacingAndGlyphs" fill="#000" stroke="#000" stroke-width="0.3">114</text><text x="528.7" y="412.6" font-size="9.5" text-anchor="middle" textLength="12.2" lengthAdjust="spacingAndGlyphs" fill="#fff" stroke="#fff" stroke-width="2.2" stroke-linejoin="round" stroke-opacity="0.95">-69</text><text x="528.7" y="412.6" font-size="9.5" text-anchor="middle" textLength="12.2" lengthAdjust="spacingAndGlyphs" fill="#000" stroke="#000" stroke-width="0.3">-69</text><text x="589.7" y="308.7" font-size="9.5" text-anchor="middle" textLength="14.0" lengthAdjust="spacingAndGlyphs" fill="#fff" stroke="#fff" stroke-width="2.2" stroke-linejoin="round" stroke-opacity="0.95">199</text><text x="589.7" y="308.7" font-size="9.5" text-anchor="middle" textLength="14.0" lengthAdjust="spacingAndGlyphs" fill="#000" stroke="#000" stroke-width="0.3">199</text><text x="589.7" y="344.7" font-size="9.5" text-anchor="middle" textLength="14.0" lengthAdjust="spacingAndGlyphs" fill="#fff" stroke="#fff" stroke-width="2.2" stroke-linejoin="round" stroke-opacity="0.95">109</text><text x="589.7" y="344.7" font-size="9.5" text-anchor="middle" textLength="14.0" lengthAdjust="spacingAndGlyphs" fill="#000" stroke="#000" stroke-width="0.3">109</text><text x="589.7" y="420.8" font-size="9.5" text-anchor="middle" textLength="12.2" lengthAdjust="spacingAndGlyphs" fill="#fff" stroke="#fff" stroke-width="2.2" stroke-linejoin="round" stroke-opacity="0.95">-90</text><text x="589.7" y="420.8" font-size="9.5" text-anchor="middle" textLength="12.2" lengthAdjust="spacingAndGlyphs" fill="#000" stroke="#000" stroke-width="0.3">-90</text><text x="650.6" y="306.4" font-size="9.5" text-anchor="middle" textLength="14.0" lengthAdjust="spacingAndGlyphs" fill="#fff" stroke="#fff" stroke-width="2.2" stroke-linejoin="round" stroke-opacity="0.95">205</text><text x="650.6" y="306.4" font-size="9.5" text-anchor="middle" textLength="14.0" lengthAdjust="spacingAndGlyphs" fill="#000" stroke="#000" stroke-width="0.3">205</text><text x="650.6" y="337.7" font-size="9.5" text-anchor="middle" textLength="14.0" lengthAdjust="spacingAndGlyphs" fill="#fff" stroke="#fff" stroke-width="2.2" stroke-linejoin="round" stroke-opacity="0.95">127</text><text x="650.6" y="337.7" font-size="9.5" text-anchor="middle" textLength="14.0" lengthAdjust="spacingAndGlyphs" fill="#000" stroke="#000" stroke-width="0.3">127</text><text x="650.6" y="416.2" font-size="9.5" text-anchor="middle" textLength="12.2" lengthAdjust="spacingAndGlyphs" fill="#fff" stroke="#fff" stroke-width="2.2" stroke-linejoin="round" stroke-opacity="0.95">-78</text><text x="650.6" y="416.2" font-size="9.5" text-anchor="middle" textLength="12.2" lengthAdjust="spacingAndGlyphs" fill="#000" stroke="#000" stroke-width="0.3">-78</text><text x="711.6" y="295.0" font-size="9.5" text-anchor="middle" textLength="14.0" lengthAdjust="spacingAndGlyphs" fill="#fff" stroke="#fff" stroke-width="2.2" stroke-linejoin="round" stroke-opacity="0.95">234</text><text x="711.6" y="295.0" font-size="9.5" text-anchor="middle" textLength="14.0" lengthAdjust="spacingAndGlyphs" fill="#000" stroke="#000" stroke-width="0.3">234</text><text x="711.6" y="330.3" font-size="9.5" text-anchor="middle" textLength="14.0" lengthAdjust="spacingAndGlyphs" fill="#fff" stroke="#fff" stroke-width="2.2" stroke-linejoin="round" stroke-opacity="0.95">146</text><text x="711.6" y="330.3" font-size="9.5" text-anchor="middle" textLength="14.0" lengthAdjust="spacingAndGlyphs" fill="#000" stroke="#000" stroke-width="0.3">146</text><text x="711.6" y="420.1" font-size="9.5" text-anchor="middle" textLength="12.2" lengthAdjust="spacingAndGlyphs" fill="#fff" stroke="#fff" stroke-width="2.2" stroke-linejoin="round" stroke-opacity="0.95">-88</text><text x="711.6" y="420.1" font-size="9.5" text-anchor="middle" textLength="12.2" lengthAdjust="spacingAndGlyphs" fill="#000" stroke="#000" stroke-width="0.3">-88</text><text x="772.5" y="381.3" font-size="9.5" text-anchor="middle" textLength="9.4" lengthAdjust="spacingAndGlyphs" fill="#fff" stroke="#fff" stroke-width="2.2" stroke-linejoin="round" stroke-opacity="0.95">13</text><text x="772.5" y="381.3" font-size="9.5" text-anchor="middle" textLength="9.4" lengthAdjust="spacingAndGlyphs" fill="#000" stroke="#000" stroke-width="0.3">13</text><text x="102.8" y="488.2" font-size="9.5" text-anchor="middle" textLength="24.2" lengthAdjust="spacingAndGlyphs" fill="#555">2020 -</text><text x="102.8" y="500.9" font-size="9.5" text-anchor="middle" textLength="33.8" lengthAdjust="spacingAndGlyphs" fill="#555">January</text><text x="163.7" y="488.2" font-size="9.5" text-anchor="middle" textLength="24.2" lengthAdjust="spacingAndGlyphs" fill="#555">2020 -</text><text x="163.7" y="500.9" font-size="9.5" text-anchor="middle" textLength="38.0" lengthAdjust="spacingAndGlyphs" fill="#555">February</text><text x="224.7" y="488.2" font-size="9.5" text-anchor="middle" textLength="24.2" lengthAdjust="spacingAndGlyphs" fill="#555">2020 -</text><text x="224.7" y="500.9" font-size="9.5" text-anchor="middle" textLength="26.4" lengthAdjust="spacingAndGlyphs" fill="#555">March</text><text x="285.6" y="488.2" font-size="9.5" text-anchor="middle" textLength="45.6" lengthAdjust="spacingAndGlyphs" fill="#555">2020 - April</text><text x="346.6" y="488.2" font-size="9.5" text-anchor="middle" textLength="44.6" lengthAdjust="spacingAndGlyphs" fill="#555">2020 - May</text><text x="407.5" y="488.2" font-size="9.5" text-anchor="middle" textLength="47.2" lengthAdjust="spacingAndGlyphs" fill="#555">2020 - June</text><text x="468.5" y="488.2" font-size="9.5" text-anchor="middle" textLength="43.5" lengthAdjust="spacingAndGlyphs" fill="#555">2020 - July</text><text x="529.4" y="488.2" font-size="9.5" text-anchor="middle" textLength="24.2" lengthAdjust="spacingAndGlyphs" fill="#555">2020 -</text><text x="529.4" y="500.9" font-size="9.5" text-anchor="middle" textLength="29.6" lengthAdjust="spacingAndGlyphs" fill="#555">August</text><text x="590.4" y="488.2" font-size="9.5" text-anchor="middle" textLength="24.2" lengthAdjust="spacingAndGlyphs" fill="#555">2020 -</text><text x="590.4" y="500.9" font-size="9.5" text-anchor="middle" textLength="46.5" lengthAdjust="spacingAndGlyphs" fill="#555">September</text><text x="651.3" y="488.2" font-size="9.5" text-anchor="middle" textLength="24.2" lengthAdjust="spacingAndGlyphs" fill="#555">2020 -</text><text x="651.3" y="500.9" font-size="9.5" text-anchor="middle" textLength="33.8" lengthAdjust="spacingAndGlyphs" fill="#555">October</text><text x="712.3" y="488.2" font-size="9.5" text-anchor="middle" textLength="24.2" lengthAdjust="spacingAndGlyphs" fill="#555">2020 -</text><text x="712.3" y="500.9" font-size="9.5" text-anchor="middle" textLength="43.8" lengthAdjust="spacingAndGlyphs" fill="#555">November</text><text x="773.2" y="488.2" font-size="9.5" text-anchor="middle" textLength="24.2" lengthAdjust="spacingAndGlyphs" fill="#555">2020 -</text><text x="773.2" y="500.9" font-size="9.5" text-anchor="middle" textLength="43.8" lengthAdjust="spacingAndGlyphs" fill="#555">December</text><rect x="253.2" y="524.6" width="9.9" height="9.9" fill="#55b08c"/><text x="267.7" y="533.5" font-size="9.5" text-anchor="start" textLength="43.7" lengthAdjust="spacingAndGlyphs" fill="#333">Hires (Net)</text><rect x="329.8" y="524.6" width="9.9" height="9.9" fill="#4eacce"/><text x="345.0" y="533.5" font-size="9.5" text-anchor="start" textLength="61.6" lengthAdjust="spacingAndGlyphs" fill="#333">Hires - External</text><rect x="425.2" y="524.6" width="9.9" height="9.9" fill="#2f7ed8"/><text x="440.2" y="533.5" font-size="9.5" text-anchor="start" textLength="151.2" lengthAdjust="spacingAndGlyphs" fill="#333">Terminations (Total) - Negative Value</text><text x="751.0" y="550.2" font-size="7.5" text-anchor="start" textLength="53.5" lengthAdjust="spacingAndGlyphs" fill="#999">Highcharts.com</text><path d="M815.4 559.8h3.6v-3.600" fill="none" stroke="#444" stroke-width="1.600"/></svg>
<div class="card" style="left:23px;top:581.6px;width:1160px;height:269.4px;border-top:3.2px solid #70d6f0;box-sizing:border-box;background:#fdfdfb"></div>
<div class="abs" style="left:23px;top:585px;width:1160px;height:42px;background:#fff"></div>
<div class="inp" style="left:36.2px;top:594.2px;width:1134px;height:28.6px;border-color:#555"></div>
<span class="t" style="left:52.5px;top:600.9px;font-size:14px;line-height:17px;font-weight:normal;color:#333;transform:scaleX(0.9485);">Salary &amp; Tenure analysis</span>
<span class="t" style="left:32.3px;top:632.0px;font-size:10.5px;line-height:13px;font-weight:normal;color:#cdcdcd;transform:scaleX(0.9463);-webkit-text-stroke:0.4px #cdcdcd;">Gender:</span>
<svg width="12" height="12" style="left:75px;top:632px" fill="none" stroke="#f5a6ae" stroke-width="1.2"><path d="M1.4 1.4l8.6 8.6M10 1.4L1.4 10"/></svg>
<span class="t" style="left:90.3px;top:632.0px;font-size:10.5px;line-height:13px;font-weight:normal;color:#d4d4d4;transform:scaleX(0.9938);">Unknown</span>
<span class="t" style="left:145.0px;top:632.0px;font-size:10.5px;line-height:13px;font-weight:normal;color:#cdcdcd;transform:scaleX(0.9641);-webkit-text-stroke:0.4px #cdcdcd;">Org Unit:</span>
<svg width="14" height="12" style="left:192px;top:632px" fill="none" stroke="#a6dfa9" stroke-width="1.15"><path d="M1.4 6.4l3.4 3.4 6.6-7.6"/></svg>
<span class="t" style="left:208.0px;top:632.0px;font-size:10.5px;line-height:13px;font-weight:normal;color:#d4d4d4;transform:scaleX(0.9600);">Engineering</span>
<svg width="1200" height="206" style="left:0;top:645px" viewBox="0 645 1200 206"><path d="M131.8 653.8V851" stroke="#dcdcdc" stroke-width="1" fill="none"/><path d="M126 653.8H131.8" stroke="#dcdcdc" stroke-width="1"/><text x="124.0" y="657.0" font-size="9" text-anchor="end" textLength="8.8" lengthAdjust="spacingAndGlyphs" fill="#d0d0d0">32</text><path d="M126 713.3H131.8" stroke="#dcdcdc" stroke-width="1"/><text x="124.0" y="716.5" font-size="9" text-anchor="end" textLength="8.8" lengthAdjust="spacingAndGlyphs" fill="#d0d0d0">24</text><path d="M126 773.1H131.8" stroke="#dcdcdc" stroke-width="1"/><text x="124.0" y="776.3" font-size="9" text-anchor="end" textLength="8.8" lengthAdjust="spacingAndGlyphs" fill="#d0d0d0">16</text><path d="M126 833.3H131.8" stroke="#dcdcdc" stroke-width="1"/><text x="124.0" y="836.5" font-size="9" text-anchor="end" textLength="4.4" lengthAdjust="spacingAndGlyphs" fill="#d0d0d0">8</text><text transform="translate(41 774) rotate(-90)" font-size="9.5" text-anchor="middle" textLength="95" lengthAdjust="spacingAndGlyphs" fill="#d4d4d4">Average Tenure (EOP)</text><g fill="#f6d5ee"><circle cx="348.9" cy="661.3" r="4.1"/><circle cx="235.4" cy="676.2" r="4.1"/><circle cx="210.8" cy="683.7" r="4.1"/><circle cx="400.5" cy="683.7" r="4.1"/><circle cx="268.6" cy="691.2" r="4.1"/><circle cx="311.3" cy="691.2" r="4.1"/><circle cx="207.6" cy="698.7" r="4.1"/><circle cx="214.5" cy="698.7" r="4.1"/><circle cx="251.7" cy="698.7" r="4.1"/><circle cx="300.8" cy="698.7" r="4.1"/><circle cx="315.7" cy="698.7" r="4.1"/><circle cx="327.9" cy="698.7" r="4.1"/><circle cx="354.4" cy="698.7" r="4.1"/><circle cx="182.8" cy="706.1" r="4.1"/><circle cx="188.3" cy="706.1" r="4.1"/><circle cx="240.6" cy="706.1" r="4.1"/><circle cx="251.2" cy="706.1" r="4.1"/><circle cx="259.9" cy="706.1" r="4.1"/><circle cx="280.8" cy="706.1" r="4.1"/><circle cx="285.2" cy="706.1" r="4.1"/><circle cx="367.3" cy="706.1" r="4.1"/><circle cx="378.7" cy="706.1" r="4.1"/><circle cx="393.8" cy="706.1" r="4.1"/><circle cx="406.7" cy="706.1" r="4.1"/><circle cx="251.7" cy="713.6" r="4.1"/><circle cx="291.4" cy="713.6" r="4.1"/><circle cx="296.9" cy="713.6" r="4.1"/><circle cx="304.6" cy="713.6" r="4.1"/><circle cx="313.2" cy="713.6" r="4.1"/><circle cx="387.6" cy="713.6" r="4.1"/><circle cx="406.7" cy="713.6" r="4.1"/><circle cx="195.5" cy="721.1" r="4.1"/><circle cx="227.7" cy="721.1" r="4.1"/><circle cx="257.2" cy="721.1" r="4.1"/><circle cx="271.6" cy="721.1" r="4.1"/><circle cx="274.1" cy="721.1" r="4.1"/><circle cx="287.0" cy="721.1" r="4.1"/><circle cx="324.4" cy="721.1" r="4.1"/><circle cx="372.5" cy="721.1" r="4.1"/><circle cx="189.8" cy="728.6" r="4.1"/><circle cx="243.1" cy="728.6" r="4.1"/><circle cx="266.1" cy="728.6" r="4.1"/><circle cx="277.8" cy="728.6" r="4.1"/><circle cx="291.4" cy="728.6" r="4.1"/><circle cx="310.0" cy="728.6" r="4.1"/><circle cx="313.0" cy="728.6" r="4.1"/><circle cx="366.8" cy="728.6" r="4.1"/><circle cx="384.6" cy="728.6" r="4.1"/><circle cx="207.1" cy="736.0" r="4.1"/><circle cx="250.5" cy="736.0" r="4.1"/><circle cx="253.7" cy="736.0" r="4.1"/><circle cx="262.4" cy="736.0" r="4.1"/><circle cx="317.5" cy="736.0" r="4.1"/><circle cx="373.7" cy="736.0" r="4.1"/><circle cx="391.8" cy="736.0" r="4.1"/><circle cx="398.8" cy="736.0" r="4.1"/><circle cx="191.0" cy="743.5" r="4.1"/><circle cx="193.0" cy="743.5" r="4.1"/><circle cx="232.4" cy="743.5" r="4.1"/><circle cx="293.9" cy="743.5" r="4.1"/><circle cx="309.5" cy="743.5" r="4.1"/><circle cx="312.5" cy="743.5" r="4.1"/><circle cx="328.1" cy="743.5" r="4.1"/><circle cx="342.7" cy="743.5" r="4.1"/><circle cx="359.6" cy="743.5" r="4.1"/><circle cx="365.8" cy="743.5" r="4.1"/><circle cx="385.6" cy="743.5" r="4.1"/><circle cx="398.8" cy="743.5" r="4.1"/><circle cx="206.1" cy="751.0" r="4.1"/><circle cx="213.3" cy="751.0" r="4.1"/><circle cx="227.4" cy="751.0" r="4.1"/><circle cx="239.3" cy="751.0" r="4.1"/><circle cx="248.3" cy="751.0" r="4.1"/><circle cx="296.4" cy="751.0" r="4.1"/><circle cx="300.6" cy="751.0" r="4.1"/><circle cx="316.2" cy="751.0" r="4.1"/><circle cx="331.8" cy="751.0" r="4.1"/><circle cx="400.5" cy="751.0" r="4.1"/><circle cx="405.5" cy="751.0" r="4.1"/><circle cx="410.4" cy="751.0" r="4.1"/><circle cx="415.4" cy="751.0" r="4.1"/><circle cx="206.1" cy="758.5" r="4.1"/><circle cx="209.6" cy="758.5" r="4.1"/><circle cx="225.0" cy="758.5" r="4.1"/><circle cx="248.8" cy="758.5" r="4.1"/><circle cx="256.2" cy="758.5" r="4.1"/><circle cx="267.9" cy="758.5" r="4.1"/><circle cx="307.5" cy="758.5" r="4.1"/><circle cx="321.2" cy="758.5" r="4.1"/><circle cx="332.3" cy="758.5" r="4.1"/><circle cx="369.0" cy="758.5" r="4.1"/><circle cx="385.1" cy="758.5" r="4.1"/><circle cx="398.0" cy="758.5" r="4.1"/><circle cx="201.4" cy="766.0" r="4.1"/><circle cx="209.1" cy="766.0" r="4.1"/><circle cx="220.7" cy="766.0" r="4.1"/><circle cx="225.7" cy="766.0" r="4.1"/><circle cx="233.9" cy="766.0" r="4.1"/><circle cx="251.7" cy="766.0" r="4.1"/><circle cx="284.5" cy="766.0" r="4.1"/><circle cx="305.1" cy="766.0" r="4.1"/><circle cx="317.9" cy="766.0" r="4.1"/><circle cx="322.9" cy="766.0" r="4.1"/><circle cx="331.1" cy="766.0" r="4.1"/><circle cx="336.5" cy="766.0" r="4.1"/><circle cx="348.4" cy="766.0" r="4.1"/><circle cx="356.6" cy="766.0" r="4.1"/><circle cx="361.3" cy="766.0" r="4.1"/><circle cx="373.7" cy="766.0" r="4.1"/><circle cx="396.8" cy="766.0" r="4.1"/><circle cx="409.2" cy="766.0" r="4.1"/><circle cx="186.5" cy="773.4" r="4.1"/><circle cx="216.8" cy="773.4" r="4.1"/><circle cx="279.8" cy="773.4" r="4.1"/><circle cx="286.0" cy="773.4" r="4.1"/><circle cx="295.9" cy="773.4" r="4.1"/><circle cx="333.6" cy="773.4" r="4.1"/><circle cx="346.5" cy="773.4" r="4.1"/><circle cx="372.5" cy="773.4" r="4.1"/><circle cx="400.0" cy="773.4" r="4.1"/><circle cx="202.2" cy="780.9" r="4.1"/><circle cx="207.1" cy="780.9" r="4.1"/><circle cx="239.8" cy="780.9" r="4.1"/><circle cx="281.5" cy="780.9" r="4.1"/><circle cx="312.2" cy="780.9" r="4.1"/><circle cx="322.4" cy="780.9" r="4.1"/><circle cx="344.7" cy="780.9" r="4.1"/><circle cx="350.9" cy="780.9" r="4.1"/><circle cx="356.6" cy="780.9" r="4.1"/><circle cx="367.8" cy="780.9" r="4.1"/><circle cx="399.3" cy="780.9" r="4.1"/><circle cx="408.0" cy="780.9" r="4.1"/><circle cx="414.9" cy="780.9" r="4.1"/><circle cx="189.8" cy="788.4" r="4.1"/><circle cx="212.1" cy="788.4" r="4.1"/><circle cx="218.3" cy="788.4" r="4.1"/><circle cx="233.9" cy="788.4" r="4.1"/><circle cx="239.3" cy="788.4" r="4.1"/><circle cx="246.8" cy="788.4" r="4.1"/><circle cx="258.7" cy="788.4" r="4.1"/><circle cx="270.6" cy="788.4" r="4.1"/><circle cx="282.7" cy="788.4" r="4.1"/><circle cx="315.7" cy="788.4" r="4.1"/><circle cx="318.7" cy="788.4" r="4.1"/><circle cx="332.8" cy="788.4" r="4.1"/><circle cx="351.4" cy="788.4" r="4.1"/><circle cx="356.6" cy="788.4" r="4.1"/><circle cx="392.6" cy="788.4" r="4.1"/><circle cx="410.4" cy="788.4" r="4.1"/><circle cx="420.4" cy="788.4" r="4.1"/><circle cx="207.1" cy="795.9" r="4.1"/><circle cx="214.5" cy="795.9" r="4.1"/><circle cx="234.4" cy="795.9" r="4.1"/><circle cx="240.6" cy="795.9" r="4.1"/><circle cx="252.5" cy="795.9" r="4.1"/><circle cx="282.7" cy="795.9" r="4.1"/><circle cx="295.6" cy="795.9" r="4.1"/><circle cx="307.5" cy="795.9" r="4.1"/><circle cx="321.2" cy="795.9" r="4.1"/><circle cx="328.6" cy="795.9" r="4.1"/><circle cx="336.0" cy="795.9" r="4.1"/><circle cx="342.2" cy="795.9" r="4.1"/><circle cx="354.6" cy="795.9" r="4.1"/><circle cx="368.3" cy="795.9" r="4.1"/><circle cx="373.7" cy="795.9" r="4.1"/><circle cx="388.1" cy="795.9" r="4.1"/><circle cx="394.3" cy="795.9" r="4.1"/><circle cx="400.5" cy="795.9" r="4.1"/><circle cx="405.5" cy="795.9" r="4.1"/><circle cx="417.9" cy="795.9" r="4.1"/><circle cx="421.6" cy="795.9" r="4.1"/><circle cx="189.3" cy="803.3" r="4.1"/><circle cx="195.5" cy="803.3" r="4.1"/><circle cx="202.2" cy="803.3" r="4.1"/><circle cx="209.1" cy="803.3" r="4.1"/><circle cx="215.8" cy="803.3" r="4.1"/><circle cx="220.7" cy="803.3" r="4.1"/><circle cx="228.2" cy="803.3" r="4.1"/><circle cx="233.9" cy="803.3" r="4.1"/><circle cx="239.3" cy="803.3" r="4.1"/><circle cx="248.0" cy="803.3" r="4.1"/><circle cx="253.7" cy="803.3" r="4.1"/><circle cx="264.1" cy="803.3" r="4.1"/><circle cx="271.6" cy="803.3" r="4.1"/><circle cx="293.9" cy="803.3" r="4.1"/><circle cx="298.9" cy="803.3" r="4.1"/><circle cx="306.3" cy="803.3" r="4.1"/><circle cx="311.3" cy="803.3" r="4.1"/><circle cx="315.7" cy="803.3" r="4.1"/><circle cx="324.9" cy="803.3" r="4.1"/><circle cx="333.6" cy="803.3" r="4.1"/><circle cx="339.0" cy="803.3" r="4.1"/><circle cx="348.4" cy="803.3" r="4.1"/><circle cx="355.9" cy="803.3" r="4.1"/><circle cx="361.3" cy="803.3" r="4.1"/><circle cx="367.0" cy="803.3" r="4.1"/><circle cx="372.0" cy="803.3" r="4.1"/><circle cx="379.4" cy="803.3" r="4.1"/><circle cx="389.4" cy="803.3" r="4.1"/><circle cx="413.7" cy="803.3" r="4.1"/><circle cx="187.8" cy="810.8" r="4.1"/><circle cx="207.1" cy="810.8" r="4.1"/><circle cx="212.1" cy="810.8" r="4.1"/><circle cx="218.3" cy="810.8" r="4.1"/><circle cx="224.5" cy="810.8" r="4.1"/><circle cx="230.7" cy="810.8" r="4.1"/><circle cx="239.3" cy="810.8" r="4.1"/><circle cx="246.8" cy="810.8" r="4.1"/><circle cx="253.7" cy="810.8" r="4.1"/><circle cx="264.1" cy="810.8" r="4.1"/><circle cx="269.1" cy="810.8" r="4.1"/><circle cx="275.3" cy="810.8" r="4.1"/><circle cx="295.9" cy="810.8" r="4.1"/><circle cx="301.3" cy="810.8" r="4.1"/><circle cx="314.5" cy="810.8" r="4.1"/><circle cx="325.6" cy="810.8" r="4.1"/><circle cx="331.1" cy="810.8" r="4.1"/><circle cx="347.2" cy="810.8" r="4.1"/><circle cx="352.2" cy="810.8" r="4.1"/><circle cx="361.3" cy="810.8" r="4.1"/><circle cx="367.0" cy="810.8" r="4.1"/><circle cx="373.2" cy="810.8" r="4.1"/><circle cx="379.4" cy="810.8" r="4.1"/><circle cx="385.6" cy="810.8" r="4.1"/><circle cx="390.6" cy="810.8" r="4.1"/><circle cx="425.3" cy="810.8" r="4.1"/><circle cx="452.1" cy="810.8" r="4.1"/><circle cx="207.1" cy="818.3" r="4.1"/><circle cx="223.2" cy="818.3" r="4.1"/><circle cx="230.7" cy="818.3" r="4.1"/><circle cx="238.8" cy="818.3" r="4.1"/><circle cx="261.7" cy="818.3" r="4.1"/><circle cx="267.9" cy="818.3" r="4.1"/><circle cx="275.3" cy="818.3" r="4.1"/><circle cx="305.1" cy="818.3" r="4.1"/><circle cx="311.3" cy="818.3" r="4.1"/><circle cx="333.6" cy="818.3" r="4.1"/><circle cx="338.5" cy="818.3" r="4.1"/><circle cx="343.5" cy="818.3" r="4.1"/><circle cx="357.1" cy="818.3" r="4.1"/><circle cx="367.0" cy="818.3" r="4.1"/><circle cx="385.6" cy="818.3" r="4.1"/><circle cx="403.0" cy="818.3" r="4.1"/><circle cx="408.7" cy="818.3" r="4.1"/><circle cx="193.5" cy="825.8" r="4.1"/><circle cx="199.7" cy="825.8" r="4.1"/><circle cx="205.9" cy="825.8" r="4.1"/><circle cx="215.8" cy="825.8" r="4.1"/><circle cx="222.0" cy="825.8" r="4.1"/><circle cx="241.8" cy="825.8" r="4.1"/><circle cx="246.8" cy="825.8" r="4.1"/><circle cx="251.7" cy="825.8" r="4.1"/><circle cx="259.2" cy="825.8" r="4.1"/><circle cx="266.6" cy="825.8" r="4.1"/><circle cx="276.5" cy="825.8" r="4.1"/><circle cx="282.0" cy="825.8" r="4.1"/><circle cx="290.2" cy="825.8" r="4.1"/><circle cx="298.4" cy="825.8" r="4.1"/><circle cx="315.7" cy="825.8" r="4.1"/><circle cx="325.6" cy="825.8" r="4.1"/><circle cx="336.0" cy="825.8" r="4.1"/><circle cx="342.2" cy="825.8" r="4.1"/><circle cx="348.4" cy="825.8" r="4.1"/><circle cx="353.4" cy="825.8" r="4.1"/><circle cx="359.6" cy="825.8" r="4.1"/><circle cx="370.8" cy="825.8" r="4.1"/><circle cx="377.0" cy="825.8" r="4.1"/><circle cx="387.6" cy="825.8" r="4.1"/><circle cx="394.3" cy="825.8" r="4.1"/><circle cx="405.5" cy="825.8" r="4.1"/><circle cx="427.3" cy="825.8" r="4.1"/><circle cx="196.7" cy="833.2" r="4.1"/><circle cx="205.9" cy="833.2" r="4.1"/><circle cx="215.8" cy="833.2" r="4.1"/><circle cx="220.7" cy="833.2" r="4.1"/><circle cx="226.9" cy="833.2" r="4.1"/><circle cx="239.3" cy="833.2" r="4.1"/><circle cx="245.5" cy="833.2" r="4.1"/><circle cx="255.5" cy="833.2" r="4.1"/><circle cx="267.9" cy="833.2" r="4.1"/><circle cx="274.1" cy="833.2" r="4.1"/><circle cx="288.9" cy="833.2" r="4.1"/><circle cx="295.1" cy="833.2" r="4.1"/><circle cx="301.3" cy="833.2" r="4.1"/><circle cx="308.8" cy="833.2" r="4.1"/><circle cx="324.9" cy="833.2" r="4.1"/><circle cx="331.1" cy="833.2" r="4.1"/><circle cx="337.3" cy="833.2" r="4.1"/><circle cx="343.5" cy="833.2" r="4.1"/><circle cx="349.7" cy="833.2" r="4.1"/><circle cx="355.9" cy="833.2" r="4.1"/><circle cx="362.1" cy="833.2" r="4.1"/><circle cx="368.3" cy="833.2" r="4.1"/><circle cx="379.4" cy="833.2" r="4.1"/><circle cx="389.4" cy="833.2" r="4.1"/><circle cx="399.3" cy="833.2" r="4.1"/><circle cx="405.5" cy="833.2" r="4.1"/><circle cx="411.7" cy="833.2" r="4.1"/><circle cx="428.3" cy="833.2" r="4.1"/><circle cx="191.0" cy="840.7" r="4.1"/><circle cx="196.0" cy="840.7" r="4.1"/><circle cx="210.8" cy="840.7" r="4.1"/><circle cx="218.3" cy="840.7" r="4.1"/><circle cx="224.5" cy="840.7" r="4.1"/><circle cx="233.1" cy="840.7" r="4.1"/><circle cx="244.3" cy="840.7" r="4.1"/><circle cx="249.3" cy="840.7" r="4.1"/><circle cx="255.5" cy="840.7" r="4.1"/><circle cx="270.3" cy="840.7" r="4.1"/><circle cx="274.1" cy="840.7" r="4.1"/><circle cx="288.9" cy="840.7" r="4.1"/><circle cx="295.1" cy="840.7" r="4.1"/><circle cx="301.3" cy="840.7" r="4.1"/><circle cx="310.0" cy="840.7" r="4.1"/><circle cx="328.6" cy="840.7" r="4.1"/><circle cx="343.5" cy="840.7" r="4.1"/><circle cx="358.4" cy="840.7" r="4.1"/><circle cx="363.3" cy="840.7" r="4.1"/><circle cx="373.2" cy="840.7" r="4.1"/><circle cx="379.4" cy="840.7" r="4.1"/><circle cx="385.6" cy="840.7" r="4.1"/><circle cx="398.0" cy="840.7" r="4.1"/><circle cx="408.0" cy="840.7" r="4.1"/><circle cx="433.5" cy="840.7" r="4.1"/><circle cx="189.8" cy="848.2" r="4.1"/><circle cx="196.0" cy="848.2" r="4.1"/><circle cx="202.2" cy="848.2" r="4.1"/><circle cx="217.0" cy="848.2" r="4.1"/><circle cx="233.1" cy="848.2" r="4.1"/><circle cx="251.7" cy="848.2" r="4.1"/><circle cx="257.9" cy="848.2" r="4.1"/><circle cx="270.3" cy="848.2" r="4.1"/><circle cx="279.0" cy="848.2" r="4.1"/><circle cx="286.5" cy="848.2" r="4.1"/><circle cx="293.9" cy="848.2" r="4.1"/><circle cx="300.1" cy="848.2" r="4.1"/><circle cx="306.3" cy="848.2" r="4.1"/><circle cx="312.5" cy="848.2" r="4.1"/><circle cx="318.7" cy="848.2" r="4.1"/><circle cx="333.6" cy="848.2" r="4.1"/><circle cx="339.8" cy="848.2" r="4.1"/><circle cx="352.2" cy="848.2" r="4.1"/><circle cx="368.3" cy="848.2" r="4.1"/><circle cx="373.2" cy="848.2" r="4.1"/><circle cx="379.4" cy="848.2" r="4.1"/><circle cx="384.4" cy="848.2" r="4.1"/><circle cx="390.6" cy="848.2" r="4.1"/><circle cx="398.0" cy="848.2" r="4.1"/><circle cx="450.1" cy="848.2" r="4.1"/><circle cx="477.0" cy="683.3" r="4.1"/><circle cx="492.0" cy="743.0" r="4.1"/><circle cx="565.0" cy="811.0" r="4.1"/><circle cx="571.0" cy="826.0" r="4.1"/><circle cx="707.0" cy="826.0" r="4.1"/><circle cx="842.0" cy="826.0" r="4.1"/><circle cx="899.0" cy="833.0" r="4.1"/><circle cx="953.0" cy="818.0" r="4.1"/><circle cx="1111.0" cy="833.0" r="4.1"/></g></svg>
<div class="abs" style="left:23px;top:170px;width:170px;height:70px;overflow:hidden"><div class="abs" style="left:-4px;top:18px;width:151px;height:30.7px;background:#fff;border-radius:3px;box-shadow:0 0 6px 1px rgba(0,0,0,.62)"></div><div class="abs" style="left:29.5px;top:18px;width:29px;height:30.7px;background:#fff;box-shadow:0 0 5px rgba(0,0,0,.32)"></div><div class="abs" style="left:29.5px;top:18px;width:29px;height:30.7px;background:#fdfdfd"></div></div>
<svg width="20" height="20" style="left:28px;top:193.3px" fill="none" stroke="#333" stroke-width="1.3">
<circle cx="10" cy="10" r="5.8"/><path d="M10 1.4l1.5 2.3h-3zM10 18.6l1.5-2.3h-3zM1.4 10l2.3-1.5v3zM18.6 10l-2.3-1.5v3z" fill="#333" stroke="none"/>
<path d="M12.6 7.4L11 11 7.4 12.6 9 9z" stroke-width="1.1"/></svg>
<svg width="22" height="20" style="left:55.600px;top:193.200px" fill="none" stroke="#333" stroke-width="1.4" stroke-linecap="round" stroke-linejoin="round">
<path d="M5.400 8.800A8.600 5.700 0 1 0 18.700 10.600"/>
<path d="M5.400 8.800c1.800-.4 2.600-1.400 1.800-2.400-.7-.9.200-2 1.600-2.200"/>
<circle cx="5.200" cy="13.200" r="1.100"/><circle cx="10" cy="15.600" r="1.100"/><circle cx="14.700" cy="13.700" r="1.100"/>
<path d="M12.300 8.300l5.700-6.300 1.700 1.500-5.700 6.300z"/></svg>
<svg width="22" height="20" style="left:86px;top:192.6px" fill="none" stroke="#333" stroke-width="1.3" stroke-linejoin="round">
<path d="M13.800 7.600l3.600-4.200V1.900H2.200v1.500l5.700 6.200v8.200h4.100v-3.400"/><path d="M13.600 8.100l5.200 5.200M18.800 8.100l-5.200 5.200" stroke-width="1.2"/></svg>
<svg width="20" height="20" style="left:115px;top:193px" fill="none" stroke="#333" stroke-width="1.3" stroke-linecap="round">
<g transform="rotate(-32 10 10)"><rect x="0.8" y="7.2" width="10.6" height="5.6" rx="2.8"/><rect x="8.6" y="7.2" width="10.6" height="5.6" rx="2.8"/></g></svg>
<svg width="20" height="20" style="left:144px;top:193px" fill="none" stroke="#333" stroke-width="1.3">
<path d="M1.400 5.400h17.200M7.600 5.400c0-3.600 4.800-3.600 4.800 0M4.400 5.400v13h11.200v-13M8.300 8.400v7M11.700 8.400v7"/></svg>
<div class="abs" style="left:77.2px;top:222px;width:47.6px;height:23px;box-sizing:border-box;border:1px solid #333;background:#fff"></div>
<span class="t" style="left:84.8px;top:228.4px;font-size:11px;line-height:13px;font-weight:normal;color:#666;transform:scaleX(0.9463);">Design</span>
<svg width="22" height="26" style="left:60px;top:206.300px" fill="#fff" stroke="#181828" stroke-width="1.25" stroke-linejoin="round">
<path d="M6.200 15.600V3.400c0-2.200 3.600-2.200 3.600 0v5.200c.3-1.400 3-1.200 3.100.3v1c.4-1.200 2.800-1 2.900.5v1.200c.5-1 2.700-.7 2.800.7v5.800c0 2.600-1.200 5.600-3.400 5.600h-4.600c-1.800 0-3-1.400-4-3L3.600 17.600c-1-1.600.8-2.800 2-1.600z"/></svg>
<div class="abs" style="left:822px;top:217px;width:454.3px;height:589.4px;background:#fff;border-radius:4px 4px 3px 3px;box-shadow:0 0 2px 1px rgba(0,0,0,.5),0 0 7px 2px rgba(0,0,0,.6)"></div>
<div class="abs" style="left:822px;top:217px;width:454.3px;height:15.3px;background:#444;border-radius:4px 4px 0 0"></div>
<span class="t" style="left:845.1px;top:251.6px;font-size:18px;line-height:22px;font-weight:normal;color:#222;transform:scaleX(0.8996);-webkit-text-stroke:0.55px #222;">Design</span>
<svg width="22" height="22" style="left:1229px;top:251px" fill="none" stroke="#333" stroke-width="1.1"><circle cx="11" cy="11" r="8.8"/><path d="M7.3 7.3l7.4 7.4M14.7 7.3l-7.4 7.4"/></svg>
<div class="bl" style="top:291px;background:#c8c8c8"></div>
<svg width="12" height="8" style="left:845.6px;top:305.8px" fill="none" stroke="#666" stroke-width="1.1"><path d="M1.6 1.6L6 6l4.400-4.400"/></svg>
<span class="t" style="left:874.2px;top:301.7px;font-size:14px;line-height:17px;font-weight:normal;color:#222;transform:scaleX(0.9553);-webkit-text-stroke:0.45px #222;">Data Visualization</span>
<svg width="8" height="12" style="left:847.6px;top:338.3px" fill="none" stroke="#666" stroke-width="1.1"><path d="M1.6 1.6L6 6l-4.400 4.400"/></svg>
<span class="t" style="left:874.2px;top:336.0px;font-size:14px;line-height:17px;font-weight:normal;color:#555;transform:scaleX(0.9196);">General</span>
<div class="bl" style="top:360.9px"></div>
<svg width="8" height="12" style="left:847.6px;top:373.8px" fill="none" stroke="#666" stroke-width="1.1"><path d="M1.6 1.6L6 6l-4.400 4.400"/></svg>
<span class="t" style="left:874.2px;top:371.5px;font-size:14px;line-height:17px;font-weight:normal;color:#555;transform:scaleX(0.9614);">Numerical Axis</span>
<div class="bl" style="top:396.4px"></div>
<svg width="8" height="12" style="left:847.6px;top:409.2px" fill="none" stroke="#666" stroke-width="1.1"><path d="M1.6 1.6L6 6l-4.400 4.400"/></svg>
<span class="t" style="left:874.2px;top:406.9px;font-size:14px;line-height:17px;font-weight:normal;color:#555;transform:scaleX(0.9305);">Percent Axis</span>
<div class="bl" style="top:432.0px"></div>
<svg width="8" height="12" style="left:847.6px;top:444.4px" fill="none" stroke="#666" stroke-width="1.1"><path d="M1.6 1.6L6 6l-4.400 4.400"/></svg>
<span class="t" style="left:874.2px;top:442.1px;font-size:14px;line-height:17px;font-weight:normal;color:#555;transform:scaleX(0.9380);">Currency Axis</span>
<div class="bl" style="top:467.1px"></div>
<svg width="8" height="12" style="left:847.6px;top:479.9px" fill="none" stroke="#666" stroke-width="1.1"><path d="M1.6 1.6L6 6l-4.400 4.400"/></svg>
<span class="t" style="left:874.2px;top:477.6px;font-size:14px;line-height:17px;font-weight:normal;color:#555;transform:scaleX(0.9573);">Metric Style</span>
<div class="bl" style="top:502.8px"></div>
<svg width="12" height="8" style="left:845.6px;top:516.8px" fill="none" stroke="#666" stroke-width="1.1"><path d="M1.6 1.6L6 6l4.400-4.400"/></svg>
<span class="t" style="left:874.2px;top:512.7px;font-size:14px;line-height:17px;font-weight:normal;color:#555;transform:scaleX(0.9173);">Series</span>
<span class="t" style="left:845.1px;top:552.2px;font-size:14px;line-height:17px;font-weight:normal;color:#555;transform:scaleX(0.9538);">Padding Around Bars</span>
<div class="inp" style="left:1120.1px;top:545.0px;width:130.6px;height:28.6px;border-color:#444;border-radius:2px"></div>
<span class="t" style="left:1136.0px;top:552.8px;font-size:13px;line-height:16px;font-weight:normal;color:#555;transform:scaleX(0.9763);">0.05</span>
<svg width="14" height="14" style="left:1222px;top:552.4px" fill="none" stroke="#222" stroke-width="1.4"><path d="M1.4 1.4l11 11M12.400 1.400l-11 11"/></svg>
<span class="t" style="left:845.1px;top:595.7px;font-size:14px;line-height:17px;font-weight:normal;color:#555;transform:scaleX(0.9570);">Padding Around Groups</span>
<div class="inp" style="left:1120.1px;top:589.4px;width:130.6px;height:28.6px;border-color:#444;border-radius:2px"></div>
<span class="t" style="left:1136.0px;top:596.3px;font-size:13px;line-height:16px;font-weight:normal;color:#555;transform:scaleX(0.9763);">0.05</span>
<svg width="14" height="14" style="left:1222px;top:596.8px" fill="none" stroke="#222" stroke-width="1.4"><path d="M1.4 1.4l11 11M12.400 1.400l-11 11"/></svg>
<div class="bl" style="top:625px;height:3px;background:#70d6f0"></div>
</body></html>
